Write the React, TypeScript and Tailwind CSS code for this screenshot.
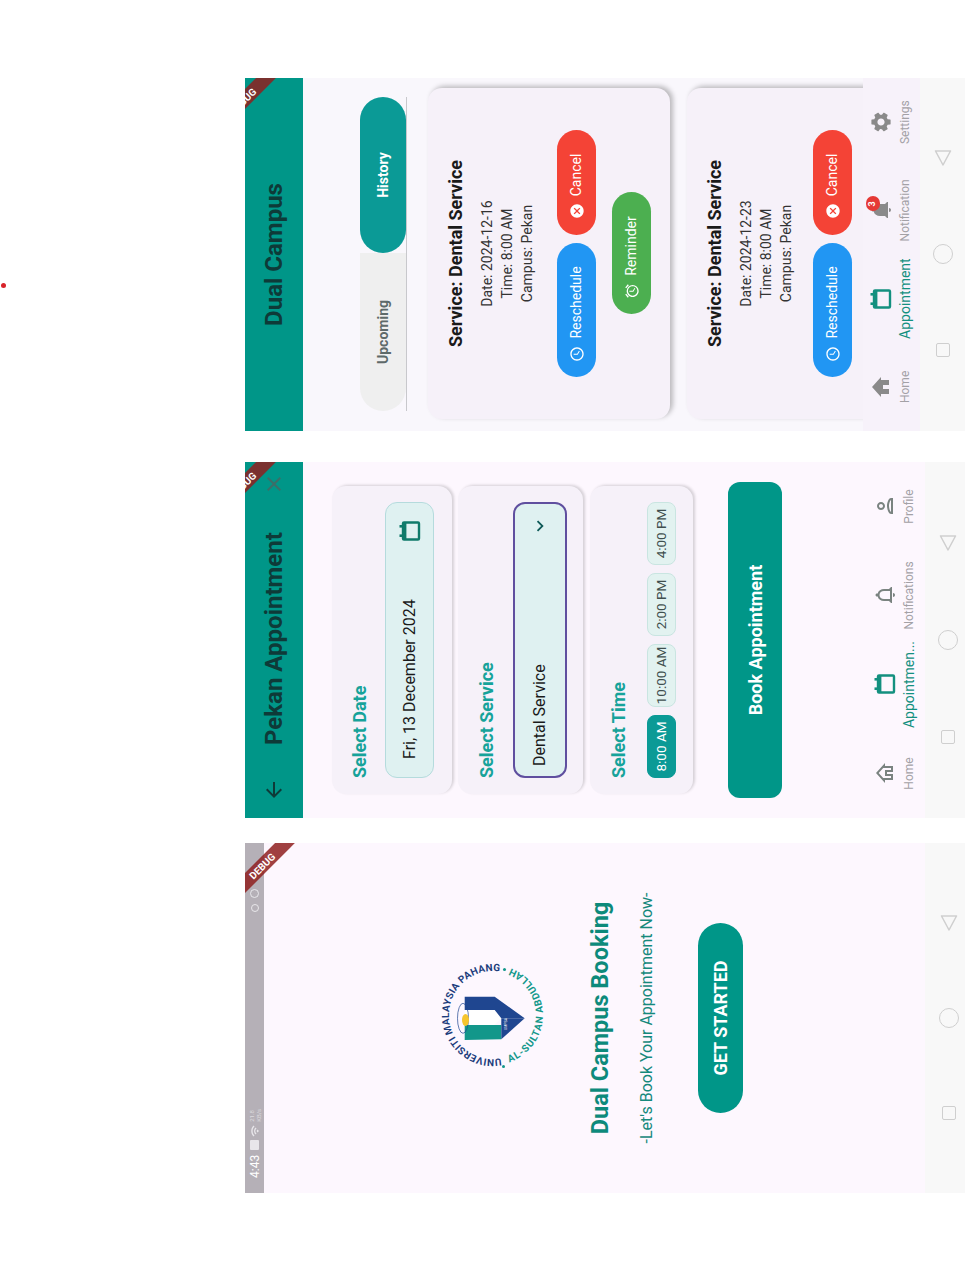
import { ReactNode } from "react";
import {
  MdAlarm,
  MdArrowBack,
  MdCancel,
  MdClose,
  MdExpandMore,
  MdHome,
  MdNotifications,
  MdOutlineHome,
  MdOutlineNotifications,
  MdOutlinePerson,
  MdOutlineSchedule,
  MdOutlineWifi,
  MdSettings,
} from "react-icons/md";

function CalendarIcon({ className }: { className: string }) {
  return (
    <svg viewBox="0 0 24 24" width={24} height={24} className={className} aria-hidden>
      <rect x="3.5" y="5" width="17" height="16" rx="1" fill="none" stroke="currentColor" strokeWidth="2.4" />
      <rect x="3" y="5" width="18" height="3.4" fill="currentColor" />
      <rect x="6" y="1.5" width="2.6" height="4" fill="currentColor" />
      <rect x="15.4" y="1.5" width="2.6" height="4" fill="currentColor" />
    </svg>
  );
}

function DebugBanner({ className }: { className: string }) {
  return (
    <div
      className={`absolute right-[-17px] z-20 flex h-[14px] w-[80px] rotate-45 items-center justify-center bg-[#8f2020]/85 text-[10px] font-bold text-white ${className}`}
    >
      DEBUG
    </div>
  );
}

function AndroidNav({ className, gap }: { className: string; gap: string }) {
  return (
    <div className={`flex shrink-0 items-center justify-center bg-[#f8f8f8] ${gap} ${className}`}>
      <div className="flex h-5 w-5 items-center justify-center">
        <div className="h-[14px] w-[14px] rounded-[2px] border-[1.5px] border-[#cfcfcf]" />
      </div>
      <div className="h-5 w-5 rounded-full border-[1.5px] border-[#cfcfcf]" />
      <svg viewBox="0 0 20 20" width={20} height={20} aria-hidden>
        <path d="M3 10 L17 2.5 L17 17.5 Z" fill="none" stroke="#cfcfcf" strokeWidth="1.5" strokeLinejoin="round" />
      </svg>
    </div>
  );
}

function NavItem({ icon, label, active }: { icon: ReactNode; label: string; active?: boolean }) {
  return (
    <div className="flex flex-1 flex-col items-center">
      <div className="flex h-6 items-center justify-center">{icon}</div>
      <span className={`mt-[4px] leading-4 whitespace-nowrap ${active ? "text-[14px] text-[#13907f]" : "text-[12px] text-[#a3a1a6]"}`}>
        {label}
      </span>
    </div>
  );
}

function UmpsaLogo() {
  return (
    <svg viewBox="0 0 110 110" width={110} height={110} aria-hidden>
      <defs>
        <path id="arcTop" d="M 11.75 63 A 44 44 0 1 1 98.25 63" />
        <path id="arcBottom" d="M 7.3 70 A 50 50 0 0 0 102.7 70" />
      </defs>
      <text fontSize="10" fontWeight="700" fill="#1c3d7c">
        <textPath href="#arcTop" textLength="153" lengthAdjust="spacing">UNIVERSITI MALAYSIA PAHANG</textPath>
      </text>
      <text fontSize="10" fontWeight="700" fill="#12978a">
        <textPath href="#arcBottom" startOffset="1%" textLength="122" lengthAdjust="spacing">AL-SULTAN ABDULLAH</textPath>
      </text>
      <circle cx="3.5" cy="65.5" r="1.5" fill="#12978a" />
      <circle cx="100.5" cy="66.5" r="1.5" fill="#12978a" />
      <polygon points="60,26.7 45,26.7 45,56.7 51.7,63.3 60,56.7" fill="#ffffff" />
      <polygon points="73.3,26.7 73.3,56.7 51.7,86.7 51.7,63.3 60,56.7 60,26.7" fill="#1f4690" />
      <polygon points="45,26.7 45,63.3 30.7,63.3 30,26.7" fill="#12978a" />
      <polygon points="51.7,63.3 51.7,86.7 30.7,63.3" fill="#1f4690" />
      <text x="46" y="69" textAnchor="middle" fontSize="3.5" fill="#ffffff">UMPSA</text>
      <ellipse cx="51.7" cy="25" rx="15" ry="5.5" fill="none" stroke="#1f4690" strokeWidth="0.7" />
      <ellipse cx="50" cy="27.5" rx="6" ry="3.5" fill="#f6c52c" />
    </svg>
  );
}

function WelcomePhone() {
  return (
    <div className="relative flex h-[720px] w-[350px] shrink-0 flex-col overflow-hidden bg-[#fdf7fe]">
      <DebugBanner className="top-[10px]" />
      <div className="flex h-[19px] shrink-0 items-center bg-[#b5b0b7] pl-[15px] text-white">
        <span className="text-[12px] leading-none">4:43</span>
        <div className="ml-[5px] h-[9px] w-[10px] rounded-[1px] bg-[#e8e6ea]" />
        <MdOutlineWifi className="ml-[3px] h-3 w-3 text-[#e8e6ea]" />
        <div className="ml-[3px] text-[6px] leading-[7px] text-[#dddbdf]">
          <div>21.8</div>
          <div>KB/s</div>
        </div>
        <div className="ml-[197px] h-[8px] w-[8px] rounded-full border border-[#e8e6ea]" />
        <div className="ml-[6px] h-[9px] w-[9px] rounded-full border border-[#e8e6ea]" />
      </div>
      <div className="flex flex-1 flex-col items-center">
        <div className="mt-[174px] ml-[6px]">
          <UmpsaLogo />
        </div>
        <div className="mt-[36px] text-[23.5px] leading-8 font-bold text-[#0d8a7b]">Dual Campus Booking</div>
        <div className="mt-[19px] text-[16px] leading-6 text-[#15897c]">-Let's Book Your Appointment Now-</div>
        <div className="mt-[39px] flex h-[45px] w-[190px] items-center justify-center rounded-full bg-[#009688] text-[18px] font-bold text-white">
          GET STARTED
        </div>
      </div>
      <AndroidNav className="h-[40px] pt-2" gap="gap-[75px]" />
    </div>
  );
}

const CARD = "rounded-[14px] bg-[#f6f1f9] shadow-[1px_2px_3px_rgba(0,0,0,0.16)]";
const TITLE = "text-[18px] leading-6 font-bold text-[#16a39a]";

function TimeChip({ label, active }: { label: string; active?: boolean }) {
  return (
    <div
      className={`flex h-[29px] w-[63px] items-center justify-center rounded-[8px] border text-[13.5px] whitespace-nowrap ${
        active ? "border-[#0b9a96] bg-[#0b9a96] text-white" : "border-[#c9e5e1] bg-[#e2f2f0] text-[#3f4f4e]"
      }`}
    >
      {label}
    </div>
  );
}

function BookingPhone() {
  return (
    <div className="relative flex h-[720px] w-[356px] shrink-0 flex-col overflow-hidden bg-[#fdf7fe]">
      <DebugBanner className="top-[-9px]" />
      <div className="flex h-[58px] shrink-0 items-center bg-[#009688] pl-[16px] text-[#0e3a38]">
        <MdArrowBack className="h-6 w-6" />
        <span className="ml-[33px] text-[24px] font-bold">Pekan Appointment</span>
        <MdClose className="ml-[36px] h-6 w-6 text-[#3c6e68]" />
      </div>

      <div className="flex flex-1 flex-col px-[24px] pt-[29px]">
        <div className={`${CARD} h-[120px] px-[16px] pt-[16px]`}>
          <div className={TITLE}>Select Date</div>
          <div className="mt-[13px] flex h-[49px] items-center justify-between rounded-[12px] border border-[#b5dbdd] bg-[#dff1f1] pr-[16px] pl-[18px]">
            <span className="text-[16px] text-[#1a1a1a]">Fri, 13 December 2024</span>
            <CalendarIcon className="text-[#0f7a6a]" />
          </div>
        </div>
        <div className={`${CARD} mt-[6px] h-[125px] px-[16px] pt-[17px]`}>
          <div className={TITLE}>Select Service</div>
          <div className="mt-[14px] flex h-[54px] items-center justify-between rounded-[12px] border-2 border-[#5f4f9f] bg-[#dff1f1] pr-[11px] pl-[10px]">
            <span className="text-[16px] text-[#1a1a1a]">Dental Service</span>
            <MdExpandMore className="h-[22px] w-[22px] text-[#0f5a58]" />
          </div>
        </div>
        <div className={`${CARD} mt-[7px] h-[103px] px-[16px] pt-[17px]`}>
          <div className={TITLE}>Select Time</div>
          <div className="mt-[16px] flex gap-[8px]">
            <TimeChip label="8:00 AM" active />
            <TimeChip label="10:00 AM" />
            <TimeChip label="2:00 PM" />
            <TimeChip label="4:00 PM" />
          </div>
        </div>
        <div className="-mx-[4px] mt-[35px] flex h-[54px] items-center justify-center rounded-[12px] bg-[#009688] text-[18px] font-bold text-white">
          Book Appointment
        </div>
      </div>

      <div className="flex h-[52px] shrink-0 pb-[8px]">
        <NavItem icon={<MdOutlineHome className="h-6 w-6 text-[#7a8380]" />} label="Home" />
        <NavItem icon={<CalendarIcon className="text-[#13907f]" />} label="Appointmen..." active />
        <NavItem icon={<MdOutlineNotifications className="h-6 w-6 text-[#7a8380]" />} label="Notifications" />
        <NavItem icon={<MdOutlinePerson className="h-6 w-6 text-[#7a8380]" />} label="Profile" />
      </div>
      <AndroidNav className="h-[40px] pt-[6px]" gap="gap-[77px]" />
    </div>
  );
}

function PillButton({
  color,
  width,
  icon,
  label,
}: {
  color: string;
  width: string;
  icon: ReactNode;
  label: string;
}) {
  return (
    <div className={`flex h-[39px] items-center justify-center gap-[7px] rounded-full pr-[8px] text-[14px] text-white ${color} ${width}`}>
      {icon}
      <span>{label}</span>
    </div>
  );
}

function AppointmentCard({ date, reminder }: { date: string; reminder?: boolean }) {
  return (
    <div className="ml-[12px] flex h-[242px] w-[331px] shrink-0 flex-col items-center rounded-[14px] bg-[#f6f1f9] pt-[16px] shadow-[2px_3px_5px_rgba(0,0,0,0.25)]">
      <div className="text-[18px] leading-6 font-bold text-[#1a1a1a]">Service: Dental Service</div>
      <div className="mt-[9px] text-center text-[14px] leading-5 text-[#333]">
        <div>Date: {date}</div>
        <div>Time: 8:00 AM</div>
        <div>Campus: Pekan</div>
      </div>
      <div className={`flex gap-[8px] ${reminder ? "mt-[20px]" : "mt-[17px]"}`}>
        <PillButton
          color="bg-[#2196f3]"
          width="w-[134px]"
          icon={<MdOutlineSchedule className="h-4 w-4" />}
          label="Reschedule"
        />
        <PillButton
          color="bg-[#f44336]"
          width="w-[105px]"
          icon={<MdCancel className="h-4 w-4" />}
          label="Cancel"
        />
      </div>
      {reminder && (
        <div className="mt-[16px]">
          <PillButton
            color="bg-[#4caf50]"
            width="w-[122px]"
            icon={<MdAlarm className="h-4 w-4" />}
            label="Reminder"
          />
        </div>
      )}
    </div>
  );
}

function AppointmentsPhone() {
  return (
    <div className="relative flex h-[720px] w-[353px] shrink-0 flex-col overflow-hidden bg-[#f9f7fc]">
      <DebugBanner className="top-[-9px]" />
      <div className="flex h-[58px] shrink-0 items-center justify-center bg-[#009688] text-[24px] font-bold text-[#0e3a38]">
        Dual Campus
      </div>

      <div className="flex min-h-0 flex-1 flex-col overflow-hidden pt-[57px]">
        <div className="ml-[20px] flex h-[47px] w-[314px] shrink-0 border-b border-[#c8c8cc] text-[14px] font-bold">
          <div className="flex w-[158px] items-center justify-center rounded-l-full bg-[#efefef] text-[#5e6a6a]">Upcoming</div>
          <div className="flex w-[156px] items-center justify-center rounded-full bg-[#0b9a96] text-white">History</div>
        </div>
        <div className="mt-[21px] flex flex-col gap-[17px]">
          <AppointmentCard date="2024-12-16" reminder />
          <AppointmentCard date="2024-12-23" />
        </div>
      </div>

      <div className="flex h-[57px] shrink-0 bg-[#f7f2fa] pt-[6px]">
        <NavItem icon={<MdHome className="h-6 w-6 text-[#8a8a8a]" />} label="Home" />
        <NavItem icon={<CalendarIcon className="text-[#13907f]" />} label="Appointment" active />
        <NavItem
          icon={
            <div className="relative">
              <MdNotifications className="h-6 w-6 text-[#8a8a8a]" />
              <span className="absolute -top-[3px] -right-[2px] flex h-[14px] w-[15px] items-center justify-center rounded-full bg-[#e53935] text-[9px] font-bold text-white">
                3
              </span>
            </div>
          }
          label="Notification"
        />
        <NavItem icon={<MdSettings className="h-6 w-6 text-[#8a8a8a]" />} label="Settings" />
      </div>
      <AndroidNav className="h-[45px]" gap="gap-[76px]" />
    </div>
  );
}

export default function App() {
  return (
    <div className="relative h-[1280px] w-[965px] overflow-hidden bg-white font-[Roboto,sans-serif]">
      {/* the whole capture is lying on its side, so lay it out upright and turn it */}
      <div className="flex h-[965px] w-[1280px] origin-top-left translate-y-[1280px] -rotate-90 pt-[245px] pl-[87px]">
        <WelcomePhone />
        <div className="ml-[25px]">
          <BookingPhone />
        </div>
        <div className="ml-[31px]">
          <AppointmentsPhone />
        </div>
      </div>
      <div className="absolute top-[283px] left-[1px] h-[5px] w-[5px] rounded-full bg-[#d8232a]" />
    </div>
  );
}
